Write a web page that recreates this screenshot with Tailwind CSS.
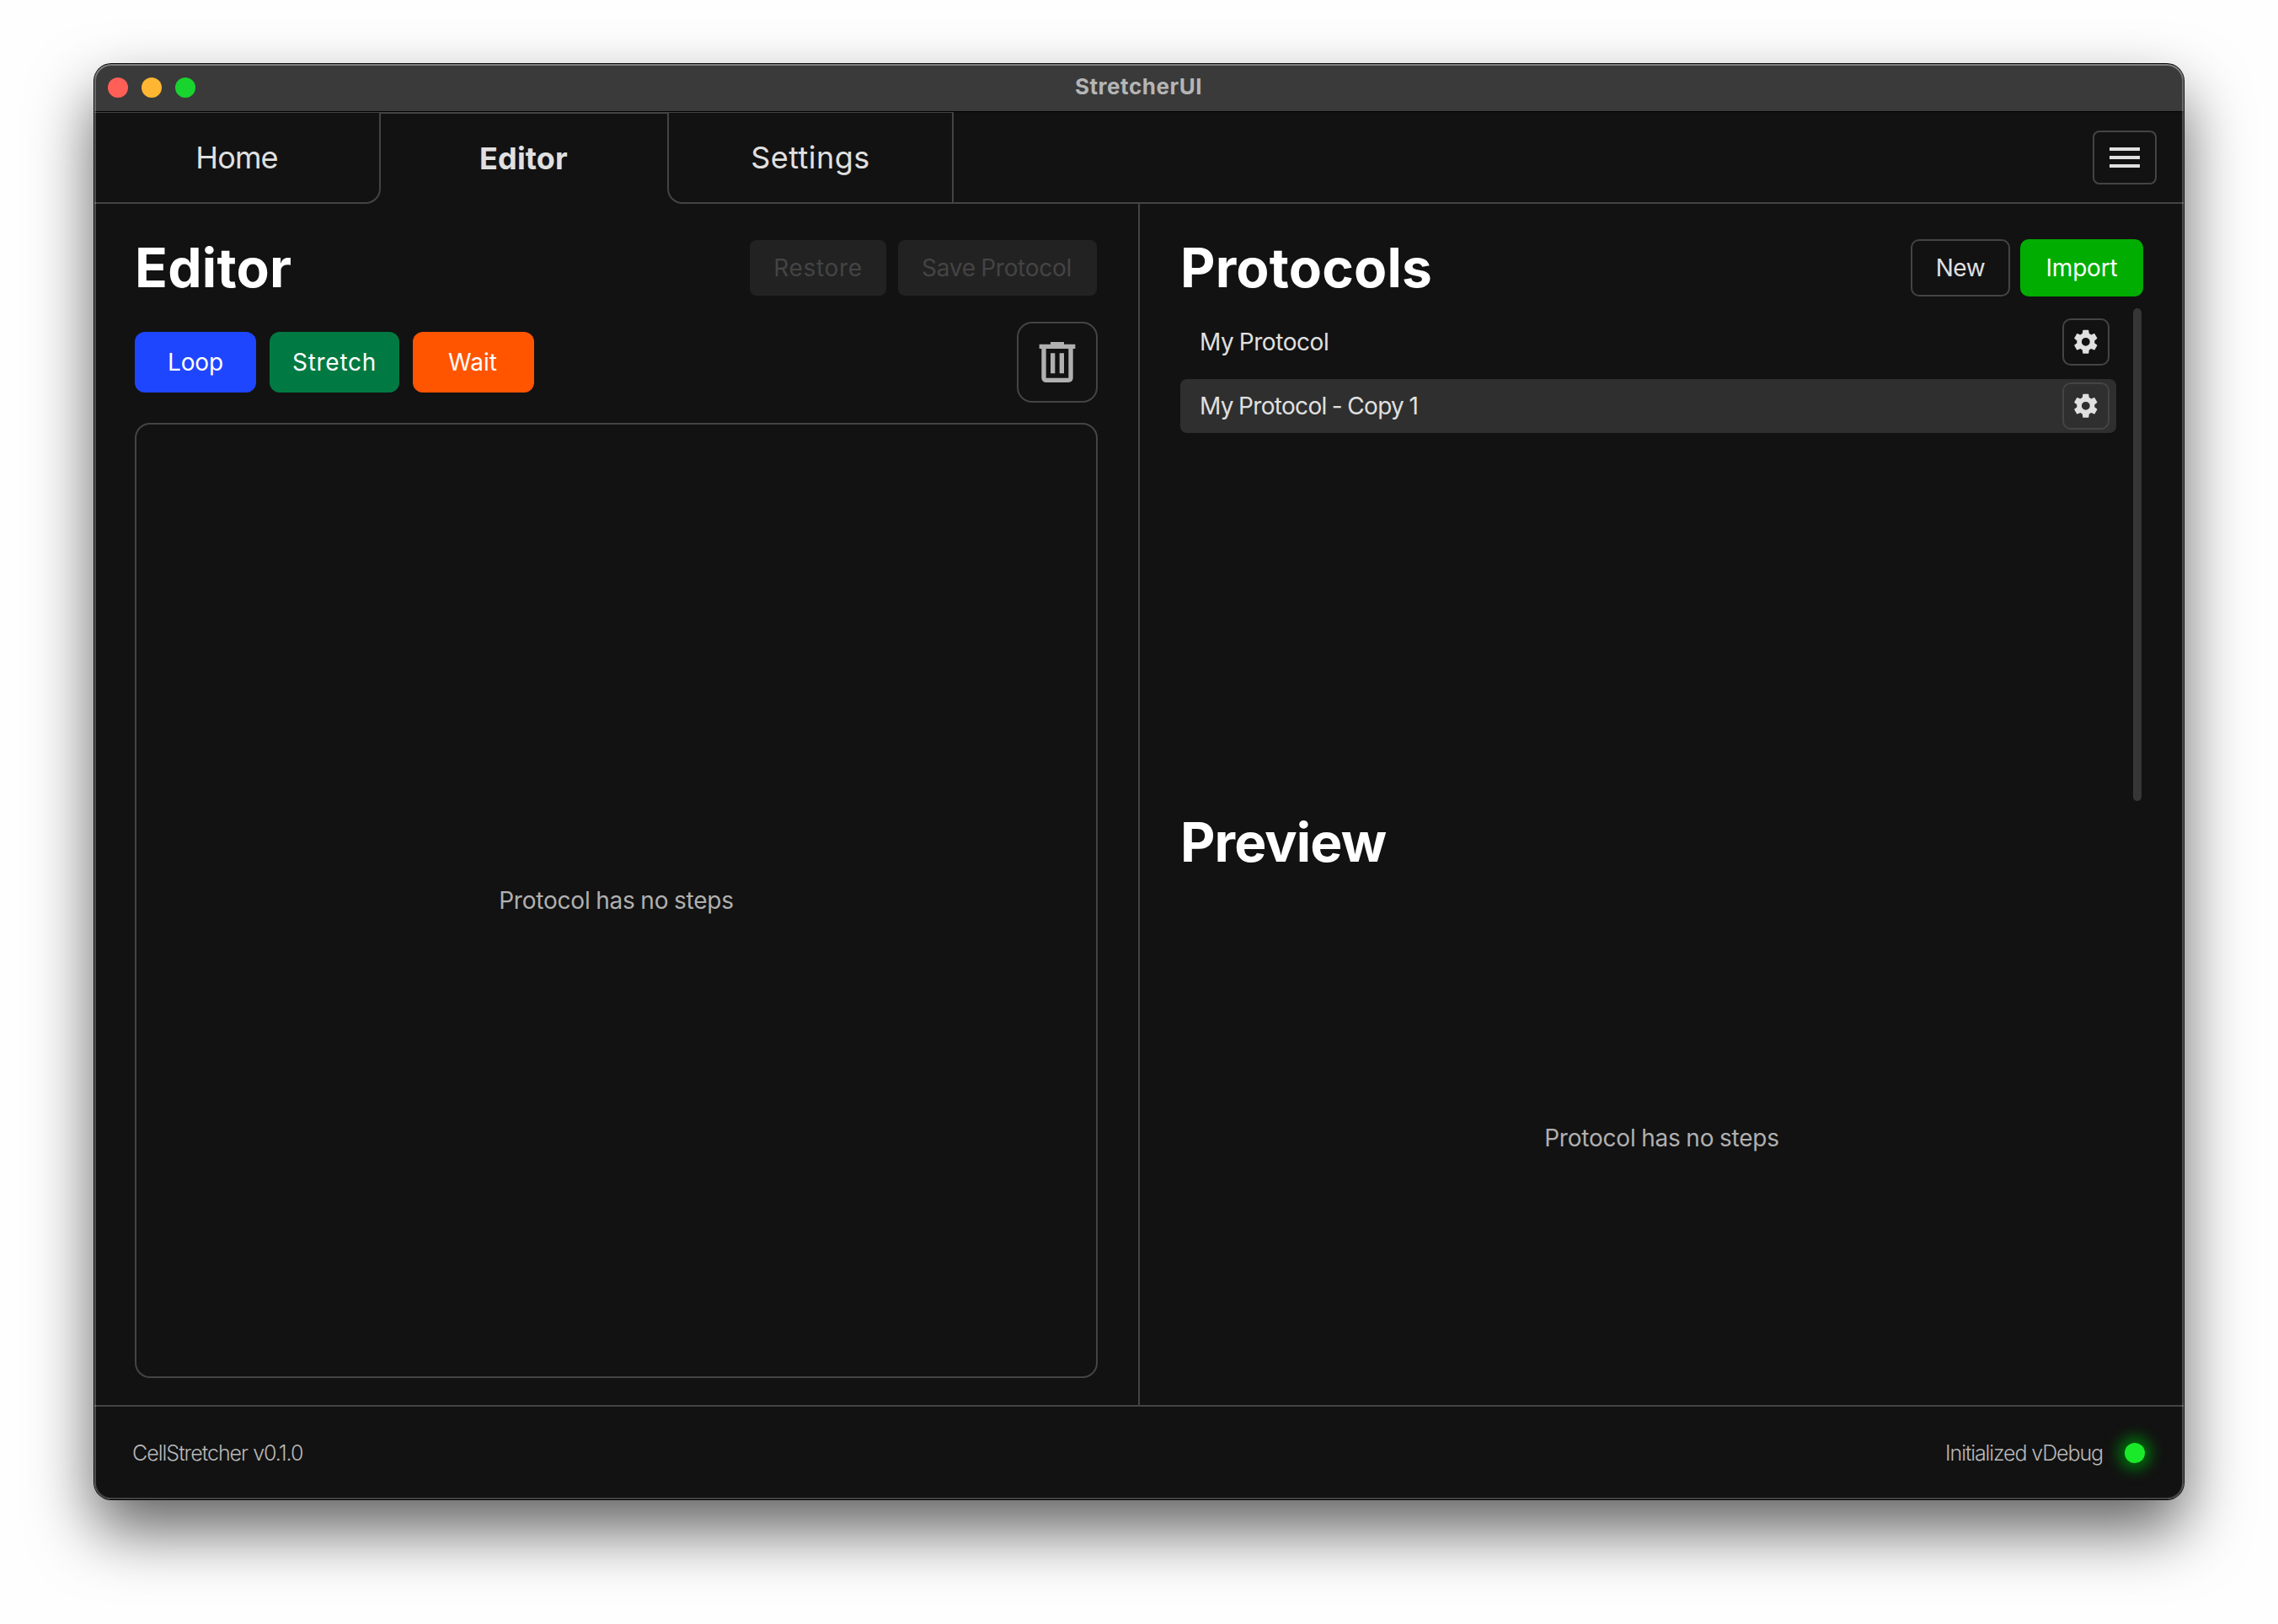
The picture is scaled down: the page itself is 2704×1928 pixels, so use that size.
<!DOCTYPE html>
<html lang="en">
<head>
    <meta charset="UTF-8">
    <meta name="viewport" content="width=device-width, initial-scale=1.0">
    <title>StretcherUI</title>
    <script src="https://cdn.jsdelivr.net/npm/@tailwindcss/browser@4"></script>
</head>
<body class="w-[2704px] h-[1928px] overflow-hidden bg-[#fefefe] pt-[76px] pl-[112px] font-['Inter','Liberation_Sans',sans-serif]">
<!-- Window -->
<div class="rounded-[20px] w-[2480px] h-[1704px] shadow-[0_0_0_1px_#000,0_36px_76px_rgba(0,0,0,0.62)]">
<div class="relative flex flex-col w-full h-full rounded-[20px] overflow-hidden bg-[#121212] text-[#e0e0e0] text-[28px] leading-none whitespace-nowrap">

    <!-- Title Bar -->
    <div class="h-[57px] shrink-0 grid grid-cols-3 items-center bg-[#3a3a3a] border-b border-black">
        <div class="flex gap-4 pl-4">
            <span class="size-6 rounded-full bg-[#ff5f57]"></span>
            <span class="size-6 rounded-full bg-[#ffb733]"></span>
            <span class="size-6 rounded-full bg-[#19d42f]"></span>
        </div>
        <div class="text-center text-[26px] font-bold tracking-[0.55px] text-[#b5b5b5] pb-0.5 pr-px">StretcherUI</div>
    </div>

    <!-- Tabs -->
    <div class="h-[109px] shrink-0 flex text-[36px]">
        <button class="w-[340px] border-t border-r-2 border-b-2 border-[#444] rounded-br-[18px] tracking-[-0.9px]">Home</button>
        <button class="w-[340px] border-t-2 border-[#444] font-bold tracking-[0.15px] pb-0.5 pr-px">Editor</button>
        <button class="w-[340px] border-t border-x-2 border-b-2 border-[#444] rounded-bl-[18px] tracking-[0.45px]">Settings</button>
        <div class="flex-1 flex items-center justify-end pr-8 pt-px border-b-2 border-[#444]">
            <button class="w-[76px] h-16 flex items-center justify-center border-2 border-[#444] rounded-lg">
                <svg class="w-9 h-6" viewBox="0 0 36 24" fill="currentColor">
                    <path d="M0 0h36v4H0zM0 10h36v4H0zM0 20h36v4H0z" />
                </svg>
            </button>
        </div>
    </div>

    <!-- Main Content -->
    <div class="h-[1426px] shrink-0 flex">
        <!-- Editor -->
        <div class="w-[1241px] shrink-0 flex flex-col border-r-2 border-[#444] pt-[42px] px-12 pb-8">
            <div class="h-[68px] flex items-center">
                <h1 class="flex-1 text-[64px] font-bold text-white tracking-[0.28px]">Editor</h1>
                <div class="flex gap-3.5 pr-px text-[#444]">
                    <button class="w-[162px] h-[66px] rounded-lg bg-[#222] tracking-[0.7px]">Restore</button>
                    <button class="w-[236px] h-[66px] rounded-lg bg-[#222] tracking-[-0.3px] [word-spacing:-1px] pr-0.5">Save Protocol</button>
                </div>
            </div>
            <div class="mt-[30px] h-24 flex items-center gap-4 text-white">
                <button class="w-36 h-[72px] rounded-xl bg-[#1f46ff] tracking-[-0.1px]">Loop</button>
                <button class="w-[154px] h-[72px] rounded-xl bg-[#007a42] tracking-[0.7px]">Stretch</button>
                <button class="w-36 h-[72px] rounded-xl bg-[#ff5400] pr-0.5">Wait</button>
                <div class="ml-auto size-24 flex items-center justify-center border-2 border-[#444] rounded-[18px] text-[#b0b0b0]">
                    <svg class="size-16" viewBox="0 0 24 24" fill="currentColor">
                        <path d="M7 21q-.825 0-1.412-.587Q5 19.825 5 19V6H4V4h5V3h6v1h5v2h-1v13q0 .825-.587 1.413Q17.825 21 17 21ZM17 6H7v13h10ZM9 17h2V8H9Zm4 0h2V8h-2ZM7 6v13Z" />
                    </svg>
                </div>
            </div>
            <div class="mt-6 flex-1 flex items-center justify-center border-2 border-[#444] rounded-[18px] text-[#b0b0b0] tracking-[-0.2px] [word-spacing:-1px]">Protocol has no steps</div>
        </div>

        <!-- Protocols -->
        <div class="flex-1 flex flex-col pt-[42px] px-12">
            <div class="h-[68px] shrink-0 flex items-center">
                <h1 class="flex-1 text-[64px] font-bold text-white tracking-[0.18px]">Protocols</h1>
                <div class="flex gap-3">
                    <button class="w-[118px] h-[68px] border-2 border-[#444] rounded-[10px] tracking-[-0.4px]">New</button>
                    <button class="w-[146px] h-[68px] rounded-[10px] bg-[#00ad00] text-white tracking-[-0.19px]">Import</button>
                </div>
            </div>
            <div class="mt-3.5 h-[585px] shrink-0 flex gap-5 pr-0.5">
                <div class="flex-1 flex flex-col gap-3 pt-2">
                    <div class="h-16 flex items-center justify-between pl-[23px] pr-2 rounded-lg">
                        <span class="tracking-[-0.43px] [word-spacing:-1px]">My Protocol</span>
                        <button class="size-14 flex items-center justify-center border-2 border-[#444] rounded-[10px]">
                            <svg class="size-[33.6px]" viewBox="0 0 24 24" fill="currentColor">
                                <path d="M12,15.5A3.5,3.5 0 0,1 8.5,12A3.5,3.5 0 0,1 12,8.5A3.5,3.5 0 0,1 15.5,12A3.5,3.5 0 0,1 12,15.5M19.43,12.97C19.47,12.65 19.5,12.33 19.5,12C19.5,11.67 19.47,11.34 19.43,11L21.54,9.37C21.73,9.22 21.78,8.95 21.66,8.73L19.66,5.27C19.54,5.05 19.27,4.96 19.05,5.05L16.56,6.05C16.04,5.66 15.5,5.32 14.87,5.07L14.5,2.42C14.46,2.18 14.25,2 14,2H10C9.75,2 9.54,2.18 9.5,2.42L9.13,5.07C8.5,5.32 7.96,5.66 7.44,6.05L4.95,5.05C4.73,4.96 4.46,5.05 4.34,5.27L2.34,8.73C2.21,8.95 2.27,9.22 2.46,9.37L4.57,11C4.53,11.34 4.5,11.67 4.5,12C4.5,12.33 4.53,12.65 4.57,12.97L2.46,14.63C2.27,14.78 2.21,15.05 2.34,15.27L4.34,18.73C4.46,18.95 4.73,19.03 4.95,18.95L7.44,17.94C7.96,18.34 8.5,18.68 9.13,18.93L9.5,21.58C9.54,21.82 9.75,22 10,22H14C14.25,22 14.46,21.82 14.5,21.58L14.87,18.93C15.5,18.67 16.04,18.34 16.56,17.94L19.05,18.95C19.27,19.03 19.54,18.95 19.66,18.73L21.66,15.27C21.78,15.05 21.73,14.78 21.54,14.63L19.43,12.97Z" />
                            </svg>
                        </button>
                    </div>
                    <div class="h-16 flex items-center justify-between pl-[23px] pr-2 rounded-lg bg-[#2f2f2f]">
                        <span class="tracking-[-0.67px] [word-spacing:-1px]">My Protocol - Copy 1</span>
                        <button class="size-14 flex items-center justify-center border-2 border-[#444] rounded-[10px]">
                            <svg class="size-[33.6px]" viewBox="0 0 24 24" fill="currentColor">
                                <path d="M12,15.5A3.5,3.5 0 0,1 8.5,12A3.5,3.5 0 0,1 12,8.5A3.5,3.5 0 0,1 15.5,12A3.5,3.5 0 0,1 12,15.5M19.43,12.97C19.47,12.65 19.5,12.33 19.5,12C19.5,11.67 19.47,11.34 19.43,11L21.54,9.37C21.73,9.22 21.78,8.95 21.66,8.73L19.66,5.27C19.54,5.05 19.27,4.96 19.05,5.05L16.56,6.05C16.04,5.66 15.5,5.32 14.87,5.07L14.5,2.42C14.46,2.18 14.25,2 14,2H10C9.75,2 9.54,2.18 9.5,2.42L9.13,5.07C8.5,5.32 7.96,5.66 7.44,6.05L4.95,5.05C4.73,4.96 4.46,5.05 4.34,5.27L2.34,8.73C2.21,8.95 2.27,9.22 2.46,9.37L4.57,11C4.53,11.34 4.5,11.67 4.5,12C4.5,12.33 4.53,12.65 4.57,12.97L2.46,14.63C2.27,14.78 2.21,15.05 2.34,15.27L4.34,18.73C4.46,18.95 4.73,19.03 4.95,18.95L7.44,17.94C7.96,18.34 8.5,18.68 9.13,18.93L9.5,21.58C9.54,21.82 9.75,22 10,22H14C14.25,22 14.46,21.82 14.5,21.58L14.87,18.93C15.5,18.67 16.04,18.34 16.56,17.94L19.05,18.95C19.27,19.03 19.54,18.95 19.66,18.73L21.66,15.27C21.78,15.05 21.73,14.78 21.54,14.63L19.43,12.97Z" />
                            </svg>
                        </button>
                    </div>
                </div>
                <div class="w-2.5 rounded-full bg-[#363636]"></div>
            </div>

            <!-- Preview -->
            <h1 class="mt-[15px] h-[68px] shrink-0 flex items-center text-[64px] font-bold text-white tracking-[-0.88px]">Preview</h1>
            <div class="flex-1 flex items-center justify-center text-[#b0b0b0] tracking-[-0.2px] [word-spacing:-1px]">Protocol has no steps</div>
        </div>
    </div>

    <!-- Footer -->
    <div class="flex-1 flex items-center justify-between border-t-2 border-[#444] pl-[45px] pr-[46px] text-[25px] font-light text-[#b8b8b8]">
        <span class="tracking-[-1px]">CellStretcher v0.1.0</span>
        <div class="flex items-center gap-[26px]">
            <span class="tracking-[-1.11px]">Initialized vDebug</span>
            <span class="size-6 rounded-full bg-[#1ae92a] shadow-[0_0_16px_8px_#006a0c]"></span>
        </div>
    </div>

    <!-- Window edge highlight -->
    <div class="absolute inset-0 rounded-[20px] pointer-events-none shadow-[inset_0_0_0_2px_rgba(255,255,255,0.2),inset_0_1px_0_1px_rgba(255,255,255,0.2)]"></div>
</div>
</div>
</body>
</html>
